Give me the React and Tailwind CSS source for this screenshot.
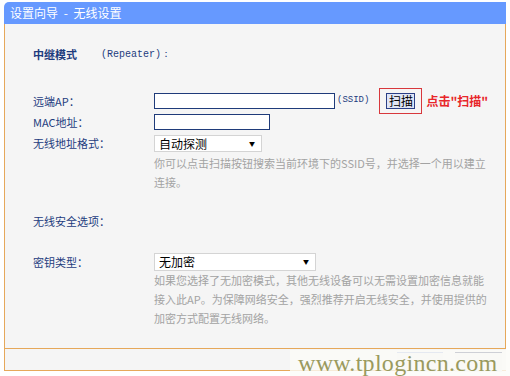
import React from 'react';

const cjk = "font-['Noto_Sans_CJK_SC','Noto_Sans',sans-serif]";
const mono = "font-['Liberation_Mono',monospace]";

const Label = ({ children, className = '' }) => (
    <div className={`w-[121px] shrink-0 text-[11px] text-[#1d3c7e] ${className}`}>{children}</div>
);

const FakeSelect = ({ value, width }) => (
    <div
        className="h-full flex items-center justify-between bg-white border border-[#d4d4d4] pl-[4px] pr-[6px] text-[12px] text-black"
        style={{ width }}
    >
        <span>{value}</span>
        <span className="text-[6px] leading-none">▼</span>
    </div>
);

const Help = ({ lines }) => (
    <div className="pl-[121px] text-[11px] leading-[19px] text-[#a3a3a3] whitespace-nowrap">
        {lines.map((l) => (
            <div key={l}>{l}</div>
        ))}
    </div>
);

const App = () => {
    return (
        <div className={`w-[510px] h-[376px] bg-white relative overflow-hidden ${cjk}`}>
            <div className="ml-[4px] mt-[2px] w-[502px]">
                {/* title bar */}
                <div className="h-[22px] bg-[#6699ff] rounded-tl-[5px] pl-[6px] text-[12px] leading-[22px] text-white">
                    设置向导 <span className="mx-[3px]">-</span> 无线设置
                </div>

                {/* main panel */}
                <div className="h-[325px] bg-[#f5f5f5] border-l border-r border-b border-[#e6a85a] pl-[28px] pt-[21px]">
                    <div className="h-[18px] flex items-center text-[11px] font-bold text-[#1d3c7e]">
                        <span>中继模式</span>
                        <span className={`${mono} text-[10px] font-normal ml-[24px]`}>(Repeater)：</span>
                    </div>

                    <div className="mt-[30px] h-[16px] flex items-center">
                        <Label>远端AP：</Label>
                        <div className="w-[181px] h-full bg-white border border-[#1f3b7a]" />
                        <span className={`${mono} text-[9px] text-[#1d3c7e] ml-[2px]`}>(SSID)</span>
                        <div className="ml-[10px] -my-[5px] border border-[#d8383c] px-[6px] py-[4px]">
                            <div className="w-[29px] h-[16px] flex items-center justify-center bg-[#dfe5f6] border border-[#2a3f86] text-[12px] text-black">
                                扫描
                            </div>
                        </div>
                        <span className="ml-[4px] text-[12px] font-semibold text-[#e8262a]">点击"扫描"</span>
                    </div>

                    <div className="mt-[5px] h-[16px] flex items-center">
                        <Label>MAC地址：</Label>
                        <div className="w-[116px] h-full bg-white border border-[#1f3b7a]" />
                    </div>

                    <div className="mt-[5px] h-[17px] flex items-center">
                        <Label>无线地址格式：</Label>
                        <FakeSelect value="自动探测" width={108} />
                    </div>

                    <div className="mt-[2px]">
                        <Help
                            lines={[
                                '你可以点击扫描按钮搜索当前环境下的SSID号，并选择一个用以建立',
                                '连接。',
                            ]}
                        />
                    </div>

                    <div className="mt-[20px] h-[18px] flex items-center">
                        <Label>无线安全选项：</Label>
                    </div>

                    <div className="mt-[23px] h-[18px] flex items-center">
                        <Label>密钥类型：</Label>
                        <FakeSelect value="无加密" width={162} />
                    </div>

                    <Help
                        lines={[
                            '如果您选择了无加密模式，其他无线设备可以无需设置加密信息就能',
                            '接入此AP。为保障网络安全，强烈推荐开启无线安全，并使用提供的',
                            '加密方式配置无线网络。',
                        ]}
                    />
                </div>

                {/* footer */}
                <div className="h-[22px] border-l border-b border-[#e6a85a] bg-[#f5f5f5] flex justify-end gap-[12px] pr-[4px] pt-[3px]">
                    <div className="w-[46px] h-[20px] border-t border-[#8d9fd8] bg-[#eeeeee]" />
                    <div className="w-[47px] h-[20px] border-t border-[#1c2450] bg-[#eeeeee]" />
                </div>
            </div>

            {/* watermark */}
            <div className="absolute left-[290px] top-[350px] w-[220px] h-[26px] bg-[#fbfbf8]/80 pl-[8px]">
                <span className="font-['Liberation_Serif',serif] text-[24px] leading-[26px] tracking-[0.3px] text-[#9a9a5e] whitespace-nowrap">
                    www.tplogincn.com
                </span>
            </div>
        </div>
    );
};

export default App;
